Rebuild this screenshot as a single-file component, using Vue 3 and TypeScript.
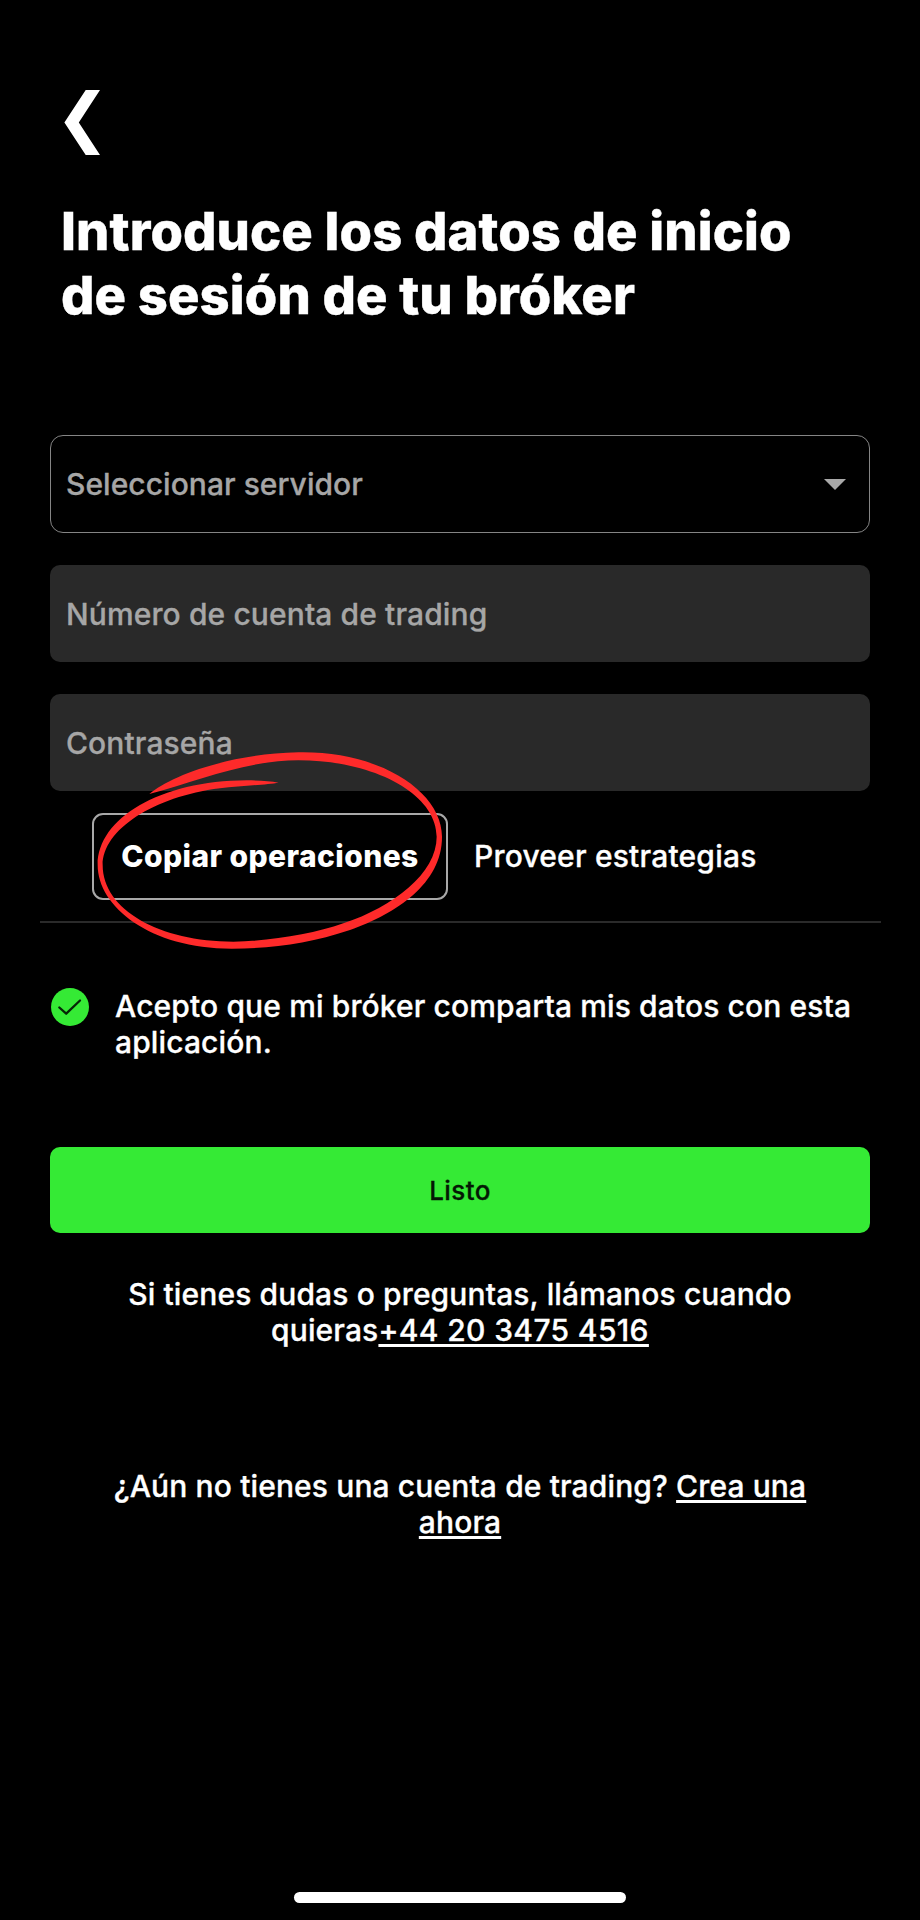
<script setup lang="ts">
import { ref } from 'vue'

type Mode = 'copy' | 'provide'

const account = ref('')
const password = ref('')
const mode = ref<Mode>('copy')
const accepted = ref(true)

const tabs: { id: Mode; label: string }[] = [
  { id: 'copy', label: 'Copiar operaciones' },
  { id: 'provide', label: 'Proveer estrategias' },
]
</script>

<template>
  <main class="screen">
    <button class="back" type="button" aria-label="Atrás">
      <svg viewBox="0 0 36 65" width="36" height="65">
        <path d="M36 0H21.7L.4 32.5 21.7 65H36L14.8 32.5Z" fill="#fff" />
      </svg>
    </button>

    <h1 class="title">
      <span class="line">Introduce los datos de inicio</span>
      <span class="line">de sesión de tu bróker</span>
    </h1>

    <form class="form" @submit.prevent>
      <button class="field select" type="button">
        <span>Seleccionar servidor</span>
        <svg viewBox="0 0 22 11" width="22" height="11"><path d="M0 0H22L11 11Z" fill="#a9a9a9" /></svg>
      </button>
      <input v-model="account" class="field input" type="text" placeholder="Número de cuenta de trading" />
      <input v-model="password" class="field input" type="password" placeholder="Contraseña" />

      <div class="tabs">
        <button
          v-for="tab in tabs"
          :key="tab.id"
          type="button"
          :class="['tab', { active: mode === tab.id }]"
          @click="mode = tab.id"
        >
          {{ tab.label }}
        </button>
        <svg class="marker" viewBox="0 0 1260 870" width="420" height="290" aria-hidden="true">
          <path
            fill="#fe2a2a"
            d="M268 342C330 290 500 222 715 217C960 212 1146 335 1146 470C1146 610 1010 700 870 750C750 790 640 806 515 806C270 806 113 680 113 555C113 415 300 302 560 301C600 301 630 303 656 308C620 314 540 318 480 325C280 350 128 450 128 555C128 690 300 785 520 785C640 782 760 762 850 730C1000 680 1130 580 1130 470C1130 340 940 241 715 241C560 241 420 300 268 342Z"
          />
        </svg>
      </div>

      <div class="consent" role="checkbox" :aria-checked="accepted" @click="accepted = !accepted">
        <svg class="check" viewBox="0 0 38 38" width="38" height="38">
          <circle cx="19" cy="19" r="19" fill="#35ea35" />
          <path
            v-if="accepted"
            d="M8.3 19.5L15.2 25.7L29 12.5"
            fill="none"
            stroke="#062406"
            stroke-width="2.3"
            stroke-linecap="round"
            stroke-linejoin="round"
          />
        </svg>
        <p class="copy">
          <span class="line">Acepto que mi bróker comparta mis datos con esta</span>
          <span class="line">aplicación.</span>
        </p>
      </div>

      <button class="submit" type="submit">Listo</button>
    </form>

    <p class="copy help">
      <span class="line">Si tienes dudas o preguntas, llámanos cuando</span>
      <span class="line">quieras<a class="link phone">+44 20 3475 4516</a></span>
    </p>

    <p class="copy signup">
      <span class="line">¿Aún no tienes una cuenta de trading? <a class="link">Crea una</a></span>
      <span class="line"><a class="link">ahora</a></span>
    </p>

    <div class="home-indicator"></div>
  </main>
</template>

<style>
html,
body {
  background: #000;
}
</style>

<style scoped>
.screen {
  box-sizing: border-box;
  display: flex;
  flex-direction: column;
  width: 920px;
  height: 1920px;
  padding: 90px 50px 17px;
  overflow: hidden;
  background: #000;
  color: #fff;
  font-family: Inter, 'Liberation Sans', sans-serif;
}

button,
input {
  box-sizing: border-box;
  margin: 0;
  padding: 0;
  border: 0;
  background: none;
  color: inherit;
  font: inherit;
}

svg {
  display: block;
  flex: none;
}

.line {
  display: block;
  white-space: nowrap;
}

.back {
  align-self: flex-start;
  height: 65px;
  margin-left: 14px;
}

.title {
  margin: 44px 0 0 11px;
  font-size: 52.5px;
  font-weight: 800;
  line-height: 64px;
  letter-spacing: 0.1px;
  -webkit-text-stroke: 0.4px currentColor;
}

.form {
  display: flex;
  flex-direction: column;
  margin-top: 108px;
}

.field,
.tab,
.copy,
.submit {
  -webkit-text-stroke: 0.3px currentColor;
}

.field {
  width: 820px;
  padding: 0 16px;
  font-size: 30px;
  font-weight: 500;
  letter-spacing: 0.04px;
  color: #a6a6a6;
}

.select {
  display: flex;
  align-items: center;
  justify-content: space-between;
  height: 98px;
  padding: 0 23px 0 15px;
  border: 1px solid #858585;
  border-radius: 13px;
}

.input {
  height: 97px;
  margin-top: 32px;
  border-radius: 10px;
  background: #292929;
  letter-spacing: 0.11px;
  outline: none;
}

.input::placeholder {
  color: #a6a6a6;
  opacity: 1;
}

.tabs {
  position: relative;
  display: flex;
  gap: 2px;
  box-sizing: border-box;
  height: 132px;
  margin: 0 -11px 0 -10px;
  padding: 22px 0 0 52px;
  border-bottom: 2px solid #2a2a2a;
}

.tab {
  height: 87px;
  padding: 0 24px 2px;
  border-radius: 11px;
  font-size: 30px;
  font-weight: 500;
  letter-spacing: 0.2px;
  white-space: nowrap;
}

.tab.active {
  width: 356px;
  padding: 0 0 2px;
  border: 2px solid #a8a8a8;
  font-weight: 800;
  letter-spacing: 0.42px;
  -webkit-text-stroke: 0;
}

.marker {
  position: absolute;
  left: 20px;
  top: -111px;
  pointer-events: none;
}

.consent {
  display: flex;
  margin-top: 65px;
}

.check {
  margin: 0 0 0 1px;
}

.copy {
  margin: 0;
  font-size: 30px;
  font-weight: 500;
  line-height: 36px;
  letter-spacing: 0.125px;
}

.consent .copy {
  margin-left: 26px;
}

.submit {
  height: 86px;
  margin-top: 87px;
  border-radius: 10px;
  background: #35ea35;
  color: #041804;
  font-size: 26px;
  font-weight: 500;
  letter-spacing: 0.4px;
}

.help {
  margin-top: 43px;
  text-align: center;
}

.signup {
  margin-top: 120px;
  text-align: center;
}

.link {
  text-decoration: underline;
  text-decoration-thickness: 2.5px;
  text-underline-offset: 3px;
  text-decoration-skip-ink: none;
}

.phone {
  letter-spacing: 0.36px;
}

.home-indicator {
  width: 332px;
  height: 11px;
  margin: auto auto 0;
  border-radius: 6px;
  background: #fff;
}
</style>
